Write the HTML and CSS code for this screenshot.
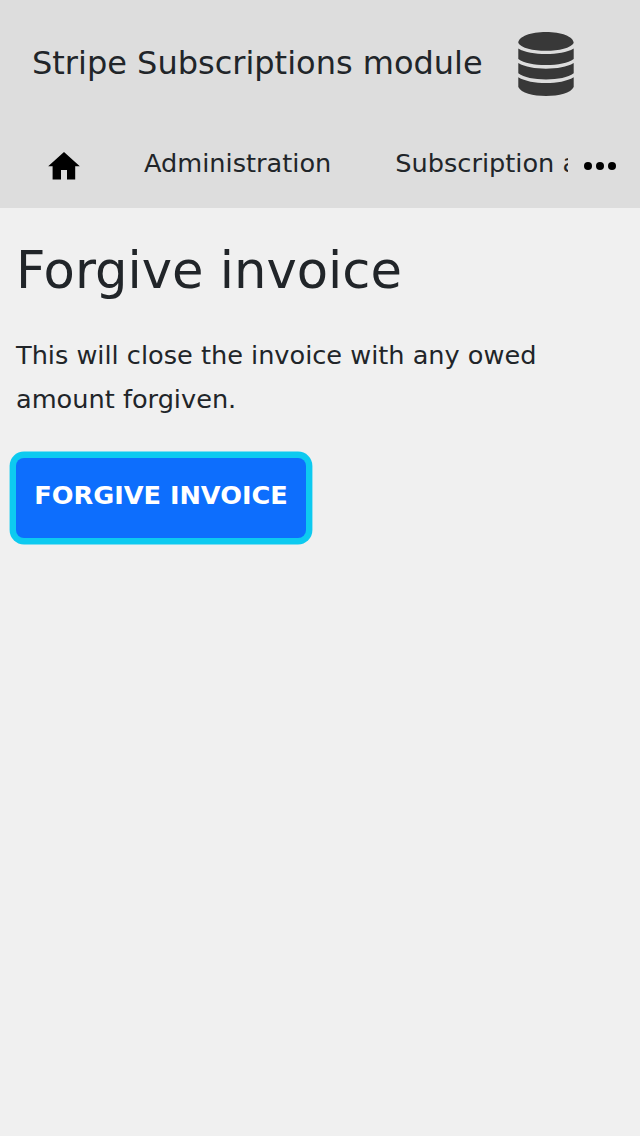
FILE: index.html
```html
<!DOCTYPE html>
<html lang="en">
<head>
<meta charset="utf-8">
<title>Forgive invoice</title>
<link rel="stylesheet" href="styles.css">
</head>
<body>
<header class="header">
  <div class="brand">
    <span class="brand-name">Stripe Subscriptions module</span>
    <svg class="brand-icon" viewBox="0 0 56 64"><path d="M.3 11C.3 4.500 13 0 28 0s27.700 4.500 27.700 11C53 16 41 18.800 28 18.800S3 16 .3 11zM.3 16.500C7 20.500 17 22 28 22s21-1.500 27.700-5.500V27C50 31.300 40 33 28 33S6 31.300.3 27zM.3 31C7 35 17 36.700 28 36.700S49 35 55.700 31v10.300C50 45.600 40 47.400 28 47.400S6 45.600.3 41.300zM.3 45.200C7 49.200 17 51 28 51s21-1.800 27.700-5.800V55C53 61 41 64 28 64S3 61 .3 55z"/></svg>
  </div>
  <nav class="nav">
    <a class="home"><svg viewBox="0 0 32 28"><path d="M16 0 31.800 14.200H27.200V27.600H19V18H13V27.600H4.600V14.200H.2z"/></svg></a>
    <a class="nav-link">Administration</a>
    <a class="nav-link nav-current">Subscription administration</a>
    <a class="more"><svg viewBox="0 0 32 8"><circle cx="4" cy="4" r="4"/><circle cx="16" cy="4" r="4"/><circle cx="28" cy="4" r="4"/></svg></a>
  </nav>
</header>
<main class="content">
  <h1 class="title">Forgive invoice</h1>
  <p class="text">This will close the invoice with any owed amount forgiven.</p>
  <button class="button">FORGIVE INVOICE</button>
</main>
</body>
</html>
```

FILE: styles.css
```css
* { box-sizing: border-box; }
body { margin: 0; min-height: 100vh; background: #f0f0f0; color: #212529; font-family: "DejaVu Sans", sans-serif; }
.header { height: 208px; background: #ddd; }
.brand { display: flex; height: 128px; padding: 32px 32px 0; }
.brand-name { width: 486px; font-size: 32px; line-height: 62px; white-space: nowrap; }
.brand-icon { width: 56px; height: 64px; fill: #383838; }
.nav { display: flex; height: 80px; }
.home { flex: none; width: 112px; padding: 24px 48px; }
.home svg { display: block; width: 32px; height: 28px; }
.nav-link { flex: none; padding: 0 32px; font-size: 25.6px; line-height: 70px; white-space: nowrap; }
.nav-current { flex: 1; min-width: 0; padding: 0; margin-left: 32px; overflow: hidden; }
.more { flex: none; width: 72px; padding: 34px 16px 0; }
.more svg { display: block; width: 32px; height: 8px; }
.content { padding: 32px 16px; }
.title { margin: 0; font-size: 51.2px; font-weight: 400; line-height: 61px; }
.text { margin: 32px 0 0; font-size: 25.6px; line-height: 44px; }
.button { display: block; width: 290px; height: 80px; margin-top: 37px; padding: 0 0 6px; border: 0; border-radius: 8px; background: #0d6efd; box-shadow: 0 0 0 6.400px #0dcaf0; color: #fff; font: 700 25.6px/44px "DejaVu Sans", sans-serif; white-space: nowrap; }
```
